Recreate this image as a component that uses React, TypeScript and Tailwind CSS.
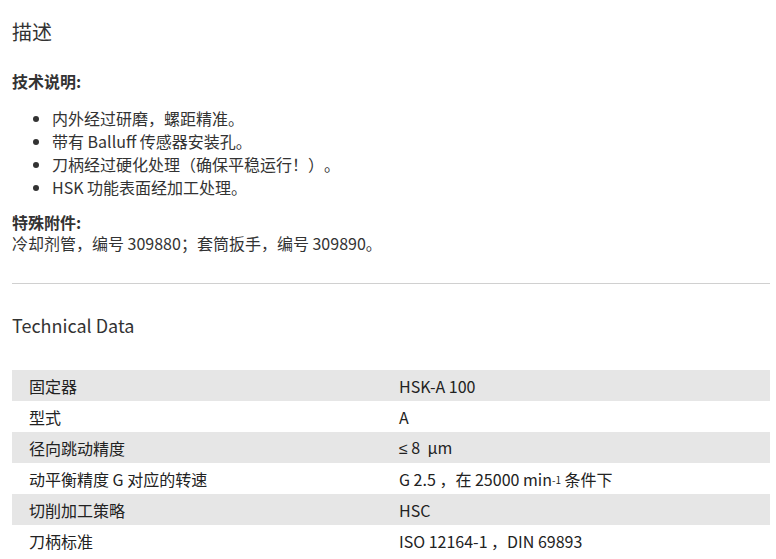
const PUNCT = /^[\u3001\u3002\uff01-\uff5e]$/;

// CJK punctuation gets a full 1em box so it keeps its full width
function Zh({ text }: { text: string }) {
  const parts = text.split(/([\u3001\u3002\uff01-\uff5e])/);
  return (
    <>
      {parts.map((p, i) => {
        if (!p) return null;
        if (PUNCT.test(p))
          return (
            <span key={i} className="inline-block w-[1em] text-center">
              {p}
            </span>
          );
        return <span key={i}>{p}</span>;
      })}
    </>
  );
}

const rows: [string, React.ReactNode][] = [
  ["固定器", "HSK-A 100"],
  ["型式", "A"],
  [
    "径向跳动精度",
    <>
      <span className="font-['Liberation_Sans',sans-serif]">≤</span> 8  µm
    </>,
  ],
  [
    "动平衡精度 G 对应的转速",
    <>
      G 2.5 <Zh text="，" />在 25000 min
      <sup className="text-[10px] relative -top-[2px]">-1</sup> 条件下
    </>,
  ],
  ["切削加工策略", "HSC"],
  ["刀柄标准", <Zh text="ISO 12164-1 ，DIN 69893" />],
];

const bullets = [
  "内外经过研磨，螺距精准。",
  "带有 Balluff 传感器安装孔。",
  "刀柄经过硬化处理（确保平稳运行！）。",
  "HSK 功能表面经加工处理。",
];

export default function App() {
  return (
    <div
      lang="zh-CN"
      className="w-[776px] h-[559px] overflow-hidden bg-white text-[#333] font-['Noto_Sans_CJK_SC',sans-serif]"
    >
      <div className="px-3">
        <h2 className="pt-[19px] text-[20px] leading-[26px] font-normal">描述</h2>

        <h3 className="mt-[25px] text-[16px] leading-[22px] font-bold">技术说明:</h3>
        <ul className="mt-[15px] pl-[40px] list-disc text-[16px] leading-[23px]">
          {bullets.map((b) => (
            <li key={b}>
              <Zh text={b} />
            </li>
          ))}
        </ul>

        <h3 className="mt-[13px] text-[16px] leading-[21px] font-bold">特殊附件:</h3>
        <p className="text-[16px] leading-[21px]">
          <Zh text="冷却剂管，编号 309880；套筒扳手，编号 309890。" />
        </p>

        <div className="mt-[29px] w-[758px] border-t border-[#d0d0d0]" />

        <h2 className="mt-[29px] text-[18px] leading-[24px] font-normal">Technical Data</h2>

        <div className="mt-[33px] w-[758px] text-[16px] text-[#222]">
          {rows.map(([k, v], i) => (
            <div
              key={k}
              className={`flex h-[31px] items-center ${i % 2 === 0 ? "bg-[#e6e6e6]" : "bg-white"}`}
            >
              <div className="w-[387px] pl-[17px]">{k}</div>
              <div className="flex-1 whitespace-pre">{v}</div>
            </div>
          ))}
        </div>
      </div>
    </div>
  );
}
